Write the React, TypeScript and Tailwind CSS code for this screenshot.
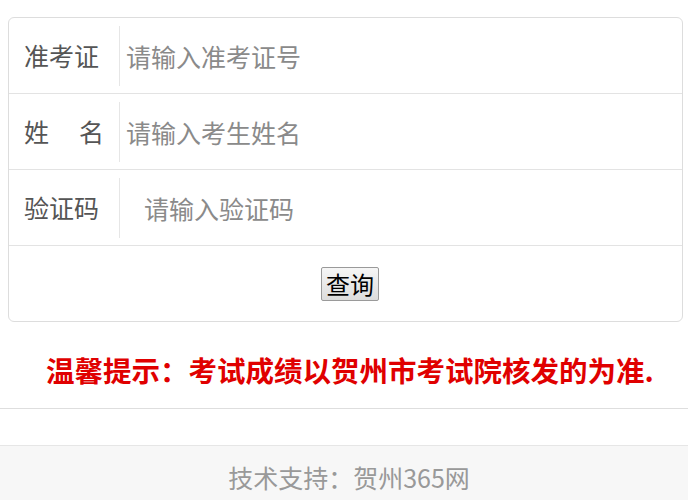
import React from 'react';

export default function App() {
  // 查询表单字段
  const fields = [
    { label: '准考证', placeholder: '请输入准考证号', pad: 'pl-[6px]' },
    { label: '姓名', placeholder: '请输入考生姓名', pad: 'pl-[6px]' },
    { label: '验证码', placeholder: '请输入验证码', pad: 'pl-[24px]' },
  ];

  return (
    <div className="min-h-[500px] bg-white font-['Noto_Sans_CJK_SC','Noto_Sans',sans-serif]">
      <div className="pt-[17px] pl-[8px] pr-[5px]">
        {/* 表单卡片 */}
        <div className="border border-[#dddddd] rounded-[6px]">
          {fields.map((f) => (
            <div key={f.label} className="h-[76px] flex items-center border-b border-[#e3e3e3]">
              <div className="w-[111px] h-[60px] flex items-center pl-[15px] border-r border-[#e6e6e6] text-[25px] text-[#555]">
                {f.label === '姓名' ? (
                  <span className="flex w-[80px] justify-between">
                    <span>姓</span>
                    <span>名</span>
                  </span>
                ) : (
                  f.label
                )}
              </div>
              <input
                type="text"
                placeholder={f.placeholder}
                className={`flex-1 min-w-0 h-full ${f.pad} text-[25px] text-[#333] placeholder:text-[#8a8a8a] outline-none bg-transparent`}
              />
            </div>
          ))}
          <div className="h-[75px] flex items-center justify-center pl-[9px]">
            <button className="h-[34px] px-[4px] text-[24px] leading-none text-black border border-[#9a9a9a] rounded-[2px] bg-gradient-to-b from-[#f6f6f6] to-[#dcdcdc]">
              查询
            </button>
          </div>
        </div>
      </div>

      {/* 温馨提示 */}
      <div className="pt-[28px] pb-[18px] pl-[12px] border-b border-[#dedede] text-center">
        <p className="text-[28.5px] leading-[40px] font-bold text-[#e00000]">
          温馨提示：考试成绩以贺州市考试院核发的为准.
        </p>
      </div>

      {/* 底部 */}
      <div className="mt-[36px] border-t border-[#e6e6e6] bg-[#f7f7f7] h-[60px] pt-[13px] pl-[10px] text-center text-[25px] leading-[36px] text-[#999]">
        技术支持：贺州365网
      </div>
    </div>
  );
}
